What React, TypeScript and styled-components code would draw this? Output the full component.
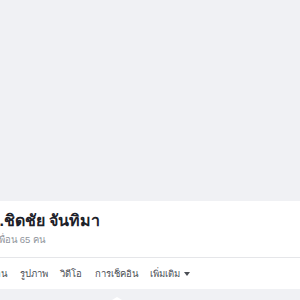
import React from "react";
import styled, { createGlobalStyle } from "styled-components";

const Global = createGlobalStyle`
  html, body { margin: 0; padding: 0; background: #e9ebee; }
  body { font-family: "Liberation Sans", Arial, sans-serif; overflow: hidden; }
`;

const Page = styled.div`
  width: 300px;
  height: 300px;
  overflow: hidden;
  display: flex;
  flex-direction: column;
  background: #f0f1f4;
`;

const Cover = styled.div`
  height: 201px;
  flex: none;
  background: #f0f1f4;
`;

const Card = styled.div`
  flex: none;
  background: #ffffff;
  display: flex;
  flex-direction: column;
  overflow: hidden;
`;

const Header = styled.div`
  height: 57px;
  display: flex;
  flex-direction: column;
  padding-top: 7px;
  margin-left: -4px;
  box-sizing: border-box;
  border-bottom: 1px solid #e5e6e9;
`;

const Name = styled.h1`
  margin: 0 0 0 -20px;
  font-size: 16px;
  font-weight: 700;
  line-height: 25px;
  color: #1d2129;
  white-space: nowrap;
`;

const Sub = styled.div`
  font-size: 9.5px;
  line-height: 14px;
  color: #90949c;
  white-space: nowrap;
`;

const Tabs = styled.nav`
  height: 31px;
  display: flex;
  align-items: center;
  gap: 12.5px;
  margin-left: -14px;
`;

const Tab = styled.span`
  font-size: 9.5px;
  color: #4b4f56;
  white-space: nowrap;
  display: flex;
  align-items: center;
  gap: 4px;
`;

const Caret = styled.span`
  width: 0;
  height: 0;
  border-left: 3px solid transparent;
  border-right: 3px solid transparent;
  border-top: 4px solid #4b4f56;
`;

const Below = styled.div`
  flex: 1;
  background: #f0f1f4;
  display: flex;
  align-items: flex-end;
  padding-left: 112px;
`;

const Pointer = styled.span`
  width: 0;
  height: 0;
  border-left: 5px solid transparent;
  border-right: 5px solid transparent;
  border-bottom: 3px solid #ffffff;
`;

export default function App() {
  return (
    <Page>
      <Global />
      <Cover />
      <Card>
        <Header>
          <Name>ร.ต.ชิดชัย จันทิมา</Name>
          <Sub>เพื่อน 65 คน</Sub>
        </Header>
        <Tabs>
          <Tab>เพื่อน</Tab>
          <Tab>รูปภาพ</Tab>
          <Tab>วิดีโอ</Tab>
          <Tab>การเช็คอิน</Tab>
          <Tab>
            เพิ่มเติม <Caret />
          </Tab>
        </Tabs>
      </Card>
      <Below>
        <Pointer />
      </Below>
    </Page>
  );
}
